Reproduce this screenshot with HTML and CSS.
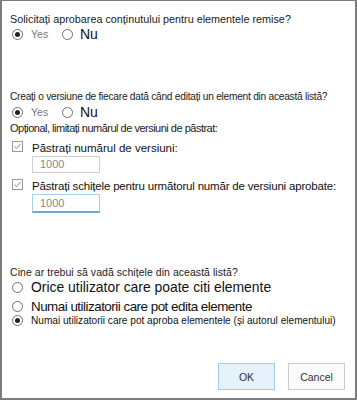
FILE: index.html
```html
<!DOCTYPE html>
<html lang="ro">
<head>
<meta charset="utf-8">
<link rel="stylesheet" href="styles.css">
</head>
<body>
<div class="dialog">
  <section class="g1">
    <p class="q q1">Solicitați aprobarea conținutului pentru elementele remise?</p>
    <div class="row">
      <span class="opt"><span class="radio on"></span><span class="yes">Yes</span></span>
      <span class="opt"><span class="radio"></span><span class="nu">Nu</span></span>
    </div>
  </section>
  <section class="g2">
    <p class="q q2">Creați o versiune de fiecare dată când editați un element din această listă?</p>
    <div class="row">
      <span class="opt"><span class="radio on"></span><span class="yes">Yes</span></span>
      <span class="opt"><span class="radio"></span><span class="nu">Nu</span></span>
    </div>
    <p class="opt-title">Opțional, limitați numărul de versiuni de păstrat:</p>
    <div class="chk-row c1"><span class="chk"><svg width="11" height="11" viewBox="0 0 11 11"><path d="M2.5 5.5 L4.5 7.5 L8.5 3" fill="none" stroke="#8a8a8a" stroke-width="1"/></svg></span><span class="chk-label">Păstrați numărul de versiuni:</span></div>
    <div class="input i1">1000</div>
    <div class="chk-row c2"><span class="chk"><svg width="11" height="11" viewBox="0 0 11 11"><path d="M2.5 5.5 L4.5 7.5 L8.5 3" fill="none" stroke="#8a8a8a" stroke-width="1"/></svg></span><span class="chk-label l2">Păstrați schițele pentru următorul număr de versiuni aprobate:</span></div>
    <div class="input i2">1000</div>
  </section>
  <section class="g3">
    <p class="q q3">Cine ar trebui să vadă schițele din această listă?</p>
    <div class="opt-line big o1"><span class="radio"></span><span>Orice utilizator care poate citi elemente</span></div>
    <div class="opt-line big o2"><span class="radio"></span><span>Numai utilizatorii care pot edita elemente</span></div>
    <div class="opt-line small o3"><span class="radio on"></span><span>Numai utilizatorii care pot aproba elementele (și autorul elementului)</span></div>
  </section>
  <div class="buttons">
    <button class="btn ok">OK</button>
    <button class="btn cancel">Cancel</button>
  </div>
</div>
</body>
</html>
```
FILE: styles.css
```css
html, body { margin: 0; padding: 0; background: #fff; }
body { font-family: "Liberation Sans", Arial, sans-serif; color: #222; }
.dialog {
  width: 357px; height: 400px; box-sizing: border-box;
  border: 2px solid #7c7c7c; border-top-width: 1px;
  display: flex; flex-direction: column;
  padding: 0 0 0 8px;
}
p { margin: 0; white-space: nowrap; }
.q { font-size: 10.9px; line-height: 14px; color: #222; }
.q1 { font-size: 10.8px; letter-spacing: 0; }
.q2 { font-size: 10.2px; letter-spacing: -0.26px; }
.g1 { padding-top: 11px; }
.row { display: flex; height: 16px; align-items: center; margin-top: 0; }
.opt { display: inline-flex; align-items: center; }
.opt:first-child { width: 50px; }
.radio {
  width: 11px; height: 11px; box-sizing: border-box; border: 1px solid #6f6f6f; border-radius: 50%;
  margin-left: 2px; margin-right: 8px; position: relative; flex: none; background: #fff;
}
.radio.on::after {
  content: ""; position: absolute; left: 2px; top: 2px; width: 5px; height: 5px; border-radius: 50%; background: #222;
}
.yes { font-size: 10.5px; color: #777; }
.nu { font-size: 14px; color: #111; margin-left: -1px; }
.g2 { margin-top: 48px; }
.opt-title { font-size: 11px; letter-spacing: -0.5px; line-height: 14px; margin-top: 1px; color: #222; }
.chk-row { display: flex; align-items: center; white-space: nowrap; }
.chk { width: 11px; height: 11px; box-sizing: border-box; border: 1px solid #9a9a9a; margin-left: 2px; margin-right: 9px; margin-bottom: 3px; display: block; flex: none; }
.chk svg { display: block; margin: -1px; }
.chk-label { font-size: 11.5px; color: #111; }
.l2 { letter-spacing: -0.18px; }
.c1 { margin-top: 4px; height: 17px; }
.input {
  margin-left: 22px; width: 68px; box-sizing: border-box; font-size: 11px; color: #888;
  padding-left: 7px; border: 1px solid #cfcfcf;
}
.i1 { height: 17px; line-height: 15px; }
.c2 { margin-top: 4px; height: 17px; }
.i2 { height: 19px; line-height: 17px; border-color: #a9cdea; border-bottom: 2px solid #6fa8dc; }
.g3 { margin-top: 52px; }
.q3 { font-size: 10.5px; letter-spacing: 0.05px; }
.opt-line { display: flex; align-items: center; white-space: nowrap; color: #111; }
.opt-line.big { font-size: 13.9px; height: 18px; }
.o1 { margin-top: -1px; }
.o2 { margin-top: 1px; font-size: 13.4px !important; letter-spacing: -0.5px; }
.opt-line.small { font-size: 10.1px; height: 12px; margin-top: -1px; }
.buttons { margin-top: auto; margin-bottom: 8px; display: flex; justify-content: flex-end; gap: 13px; padding-right: 10px; }
.btn { width: 57px; height: 27px; font-family: inherit; font-size: 10.5px; color: #333; box-sizing: border-box; padding: 0; }
.ok { background: #e5f1fb; border: 1px solid #a5c9e8; }
.cancel { background: #fbfbfb; border: 1px solid #cccccc; }
```
